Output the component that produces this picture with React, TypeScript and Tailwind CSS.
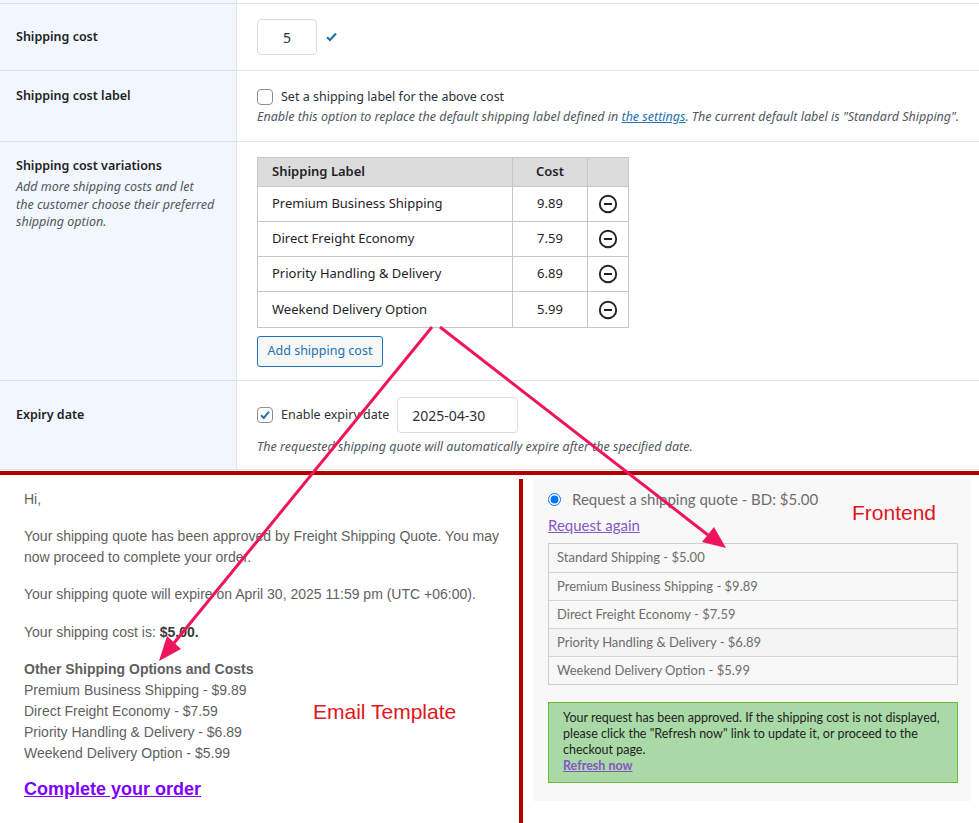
import React from "react";

const adminFont = { fontFamily: '"Noto Sans", "Open Sans", sans-serif' };
const emailFont = { fontFamily: '"Liberation Sans", Arial, sans-serif' };
const frontFont = { fontFamily: 'Lato, "Noto Sans", sans-serif' };

function MinusCircle() {
  return (
    <svg width="20" height="20" viewBox="0 0 20 20" fill="none">
      <circle cx="10" cy="10" r="8.2" stroke="#1d2327" strokeWidth="1.9" />
      <line x1="6" y1="10" x2="14" y2="10" stroke="#1d2327" strokeWidth="2" />
    </svg>
  );
}

function CheckBox({ checked }: { checked?: boolean }) {
  return (
    <div className="w-4 h-4 shrink-0 rounded-[4px] border border-[#8c8f94] bg-white flex items-center justify-center">
      {checked && (
        <svg width="14" height="14" viewBox="0 0 14 14">
          <path d="M3 7.2 L5.8 10 L11 3.6" stroke="#2271b1" strokeWidth="2" fill="none" />
        </svg>
      )}
    </div>
  );
}

const rows = [
  ["Premium Business Shipping", "9.89"],
  ["Direct Freight Economy", "7.59"],
  ["Priority Handling & Delivery", "6.89"],
  ["Weekend Delivery Option", "5.99"],
];

function Admin() {
  return (
    <div className="flex flex-col text-[#1d2327]" style={adminFont}>
      <div className="grid grid-cols-[237px_1fr] border-b border-[#dde3ee] h-[4px]">
        <div className="bg-[#f2f6fd] border-r border-[#dde3ee]" />
        <div />
      </div>
      {/* Shipping cost */}
      <div className="grid grid-cols-[237px_1fr] border-b border-[#dde3ee] h-[67px]">
        <div className="bg-[#f2f6fd] border-r border-[#dde3ee] pl-4 flex items-center text-[12.5px] font-semibold">
          Shipping cost
        </div>
        <div className="pl-5 flex items-center">
          <div className="w-[60px] h-[36px] border border-[#dcdcde] rounded-[4px] bg-white flex items-center justify-center text-[14px] text-[#2c3338]">
            5
          </div>
          <svg className="ml-[9px]" width="11" height="10" viewBox="0 0 11 10">
            <path d="M1 5.2 L4 8 L10 1.5" stroke="#2271b1" strokeWidth="2.2" fill="none" />
          </svg>
        </div>
      </div>
      {/* Shipping cost label */}
      <div className="grid grid-cols-[237px_1fr] border-b border-[#dde3ee] h-[71px]">
        <div className="bg-[#f2f6fd] border-r border-[#dde3ee] pl-4 pt-[15px] text-[12.5px] font-semibold leading-5">
          Shipping cost label
        </div>
        <div className="pl-5 pt-4">
          <div className="flex items-center gap-2 h-5 text-[12.5px] text-[#2c3338]">
            <CheckBox />
            <span>Set a shipping label for the above cost</span>
          </div>
          <div className="text-[12.5px] italic text-[#50575e] leading-5 whitespace-nowrap">
            Enable this option to replace the default shipping label defined in{" "}
            <span className="text-[#2271b1] underline">the settings</span>. The current default label is "Standard Shipping".
          </div>
        </div>
      </div>
      {/* variations */}
      <div className="grid grid-cols-[237px_1fr] border-b border-[#dde3ee] h-[239px]">
        <div className="bg-[#f2f6fd] border-r border-[#dde3ee] pl-4 pt-[14px]">
          <div className="text-[12.5px] font-semibold leading-5">Shipping cost variations</div>
          <div className="mt-[2px] text-[12.5px] italic text-[#50575e] leading-[17.5px] whitespace-nowrap">
            Add more shipping costs and let
            <br />
            the customer choose their preferred
            <br />
            shipping option.
          </div>
        </div>
        <div className="pl-5 pt-[15px]">
          <div className="w-[372px] border border-[#c6c7c9] bg-white">
            <div className="flex h-[29px] bg-[#dcdcdc] border-b border-[#c6c7c9] text-[13px] font-semibold">
              <div className="w-[255px] border-r border-[#c6c7c9] pl-[14px] flex items-center">Shipping Label</div>
              <div className="w-[75px] border-r border-[#c6c7c9] flex items-center justify-center">Cost</div>
              <div className="flex-1" />
            </div>
            {rows.map(([l, c], i) => (
              <div
                key={l}
                className={`flex h-[35px] text-[13px] ${i < rows.length - 1 ? "border-b border-[#c6c7c9]" : "h-[34px]"}`}
              >
                <div className="w-[255px] border-r border-[#c6c7c9] pl-[14px] flex items-center">{l}</div>
                <div className="w-[75px] border-r border-[#c6c7c9] flex items-center justify-center">{c}</div>
                <div className="flex-1 flex items-center justify-center">
                  <MinusCircle />
                </div>
              </div>
            ))}
          </div>
          <div className="mt-2 w-[126px] h-[31px] border border-[#2271b1] rounded-[3px] bg-[#f6f7f7] text-[#2271b1] text-[12.5px] flex items-center justify-center">
            Add shipping cost
          </div>
        </div>
      </div>
      {/* Expiry */}
      <div className="grid grid-cols-[237px_1fr] border-b border-[#dde3ee] h-[89px]">
        <div className="bg-[#f2f6fd] border-r border-[#dde3ee] pl-4 pt-6 text-[12.5px] font-semibold leading-5">
          Expiry date
        </div>
        <div className="pl-5 pt-4">
          <div className="flex items-center">
            <CheckBox checked />
            <span className="ml-2 text-[12.5px] text-[#2c3338]">Enable expiry date</span>
            <div className="ml-[8px] w-[121px] h-[36px] border border-[#dcdcde] rounded-[4px] bg-white flex items-center pl-[14px] text-[14px] text-[#2c3338]">
              2025-04-30
            </div>
          </div>
          <div className="mt-[4px] text-[12.5px] italic text-[#50575e] leading-5">
            The requested shipping quote will automatically expire after the specified date.
          </div>
        </div>
      </div>
    </div>
  );
}

function Email() {
  return (
    <div className="w-[519px] shrink-0 pl-6 pt-[14px] text-[14px] leading-[21px] text-[#5f5f5f]" style={emailFont}>
      <p className="mb-[16px]">Hi,</p>
      <p className="mb-[16px] pr-4">
        Your shipping quote has been approved by Freight Shipping Quote. You may now proceed to complete your order.
      </p>
      <p className="mb-[17px]">Your shipping quote will expire on April 30, 2025 11:59 pm (UTC +06:00).</p>
      <p className="mb-[16px]">
        Your shipping cost is: <b className="text-[#3a3a3a]">$5.00.</b>
      </p>
      <div className="font-bold">Other Shipping Options and Costs</div>
      <div>Premium Business Shipping - $9.89</div>
      <div>Direct Freight Economy - $7.59</div>
      <div>Priority Handling &amp; Delivery - $6.89</div>
      <div>Weekend Delivery Option - $5.99</div>
      <div className="mt-[13px] text-[18px] leading-[25px] font-bold text-[#8000ff] underline">Complete your order</div>
    </div>
  );
}

const opts = [
  "Standard Shipping - $5.00",
  "Premium Business Shipping - $9.89",
  "Direct Freight Economy - $7.59",
  "Priority Handling & Delivery - $6.89",
  "Weekend Delivery Option - $5.99",
];

function Frontend() {
  return (
    <div className="ml-[10px] mt-1 w-[438px] h-[322px] bg-[#f8f8f8] pl-[15px] pr-[13px] pt-[7px]" style={frontFont}>
      <div className="flex items-center h-[26px]">
        <input type="radio" checked readOnly className="w-[13px] h-[13px] m-0 accent-[#0075ff]" />
        <span className="ml-[11px] text-[15px] text-[#6d6d6d]">Request a shipping quote - BD: $5.00</span>
      </div>
      <div className="h-[27px] flex items-center">
        <span className="text-[15px] text-[#8756c4] underline">Request again</span>
      </div>
      <div className="mt-[4px] border border-[#cfcfcf]">
        {opts.map((o, i) => (
          <div
            key={o}
            className={`h-[28px] pl-[8px] flex items-center text-[13px] text-[#6d6d6d] ${i > 0 ? "border-t border-[#d5d5d5]" : "h-[27px]"} ${i === 3 ? "bg-[#f4f4f4]" : ""}`}
          >
            {o}
          </div>
        ))}
      </div>
      <div className="mt-[17px] border border-[#6abb35] bg-[#a9d9a6] pl-[14px] pt-[7px] pb-[8px] text-[12.5px] leading-4 text-[#1f1f1f]">
        Your request has been approved. If the shipping cost is not displayed, please click the "Refresh now" link to update it, or proceed to the checkout page.
        <div className="font-bold text-[#8756c4] underline">Refresh now</div>
      </div>
    </div>
  );
}

function Arrows() {
  const c = "#f0145a";
  return (
    <svg className="absolute left-0 top-0 pointer-events-none" width="979" height="823" viewBox="0 0 979 823">
      <line x1="432" y1="327" x2="174" y2="643" stroke={c} strokeWidth="3" />
      <polygon points="159,661 181,649 167,636" fill={c} />
      <line x1="440" y1="327" x2="708" y2="535" stroke={c} strokeWidth="3" />
      <polygon points="726,548 702,542 714,527" fill={c} />
    </svg>
  );
}

export default function App() {
  return (
    <div className="relative w-[979px] h-[823px] overflow-hidden bg-white">
      <Admin />
      <div className="h-px" />
      <div className="h-1 bg-[#b00000]" />
      <div className="flex h-[348px]">
        <Email />
        <div className="mt-1 w-1 bg-[#b00000] shrink-0" />
        <Frontend />
      </div>
      <div className="absolute left-[313px] top-[696px] text-[21px] text-[#e0161c]" style={emailFont}>
        Email Template
      </div>
      <div className="absolute left-[852px] top-[497px] text-[21px] text-[#e0161c]" style={emailFont}>
        Frontend
      </div>
      <Arrows />
    </div>
  );
}
